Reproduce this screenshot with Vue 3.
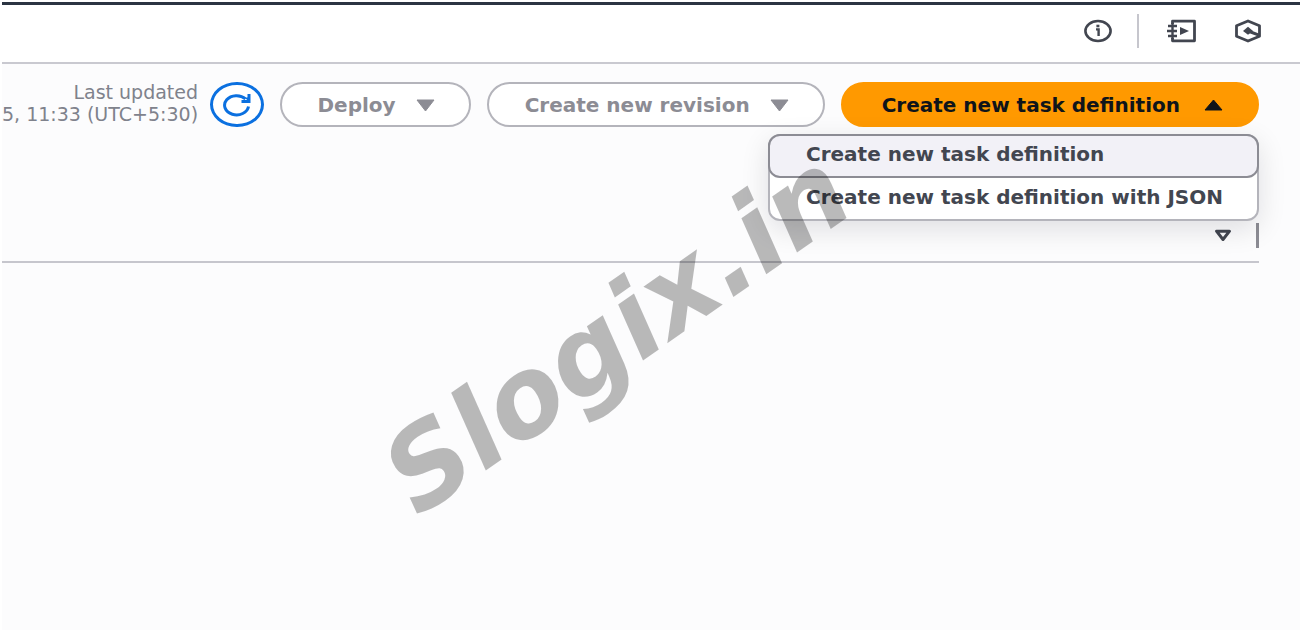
<script setup>
import { ref } from 'vue'

const menuOpen = ref(true)
const menuItems = ['Create new task definition', 'Create new task definition with JSON']
</script>

<template>
  <div class="page">
    <header class="topbar">
      <button class="icon-btn" type="button" aria-label="Info">
        <svg width="28" height="24" viewBox="0 0 28 24" fill="none" stroke="#424650" stroke-width="2.6">
          <ellipse cx="14" cy="12" rx="12.6" ry="10" />
          <path d="M12 10.4h2.600v6.6" stroke-width="2.4" />
          <path d="M12.4 7h3" stroke-width="2.6" />
        </svg>
      </button>
      <span class="divider"></span>
      <button class="icon-btn notebook" type="button" aria-label="Tutorials">
        <svg width="30" height="24" viewBox="0 0 30 24" fill="none" stroke="#424650" stroke-width="2.8">
          <path d="M5.500 5V2.200h22v19.600h-22V19" stroke-linejoin="round" />
          <path d="M1 7h9M0 12h10M1 17h9" stroke-width="2.4" />
          <path d="M5.500 4v16" stroke-width="2.4" />
          <path d="M13 8v8l9-4z" fill="#424650" stroke="none" />
        </svg>
      </button>
      <button class="icon-btn" type="button" aria-label="Preferences">
        <svg width="28" height="24" viewBox="0 0 28 24" fill="none" stroke="#424650" stroke-width="2.8">
          <path d="M14 2l11.500 4.800v10.400L14 22l-11.500-4.800V6.800z" stroke-linejoin="round" />
          <path d="M9 12l5-4.200 5 4.200-5 3.800z" fill="#424650" stroke="none" />
          <path d="M14 12l11 4.200" stroke-width="3" />
        </svg>
      </button>
    </header>

    <main class="content">
      <div class="toolbar">
        <p class="updated">Last updated<br />5, 11:33 (UTC+5:30)</p>
        <button class="refresh" type="button" aria-label="Refresh">
          <svg width="28" height="24" viewBox="0 0 28 24" fill="none" stroke="#0b70e0" stroke-width="3">
            <path d="M25.500 13.500A12 9.600 0 1 1 22.500 5.800" />
            <path d="M26 1v7.500H18.500" />
            <path d="M22 5l4 3.500V4z" fill="#0b70e0" stroke="none" />
          </svg>
        </button>
        <button class="btn" type="button">
          Deploy
          <svg width="19" height="12" viewBox="0 0 19 12"><path d="M1 1h17L9.500 12z" fill="currentColor" stroke="currentColor" stroke-linejoin="round" /></svg>
        </button>
        <button class="btn" type="button">
          Create new revision
          <svg width="19" height="12" viewBox="0 0 19 12"><path d="M1 1h17L9.500 12z" fill="currentColor" stroke="currentColor" stroke-linejoin="round" /></svg>
        </button>
        <div class="dropdown">
          <button class="btn primary" type="button" :aria-expanded="menuOpen" @click="menuOpen = !menuOpen">
            Create new task definition
            <svg width="19" height="12" viewBox="0 0 19 12"><path d="M1 11h17L9.500 1z" fill="currentColor" stroke="currentColor" stroke-linejoin="round" /></svg>
          </button>
          <ul v-if="menuOpen" class="menu">
            <li v-for="(item, i) in menuItems" :key="item">
              <button type="button" class="item" :class="{ active: i === 0 }">{{ item }}</button>
            </li>
          </ul>
        </div>
      </div>
      <div class="table-head">
        <button class="sort" type="button" aria-label="Sort">
          <svg width="18" height="13" viewBox="0 0 18 13"><path d="M2.500 2.200h13L9 10.500z" fill="none" stroke="#424650" stroke-width="3" stroke-linejoin="round" /></svg>
        </button>
        <span class="resizer"></span>
      </div>
    </main>

    <svg class="watermark" width="1300" height="630" aria-hidden="true">
      <text transform="translate(418 518) rotate(-35)">Slogix.in</text>
    </svg>
  </div>
</template>

<style>
body {
  background: #fff;
}
</style>

<style scoped>
.page {
  position: relative;
  display: flex;
  flex-direction: column;
  min-height: 100vh;
  padding: 2px 0 0 2px;
  box-sizing: border-box;
  overflow: hidden;
  font-family: "DejaVu Sans", sans-serif;
}
button {
  font-family: inherit;
  cursor: pointer;
}
svg {
  display: block;
  flex: none;
}
.topbar {
  display: flex;
  align-items: center;
  justify-content: flex-end;
  height: 52px;
  padding: 0 38px 5px 0;
  border-top: 3px solid #2b3442;
  border-bottom: 2px solid #c9c9d0;
  background: #fff;
}
.icon-btn {
  padding: 0;
  border: 0;
  background: none;
}
.divider {
  width: 2px;
  height: 34px;
  margin: 0 28px 0 25px;
  background: #c6c6cd;
}
.notebook {
  margin-right: 37px;
}
.content {
  flex: 1;
  background: #fcfcfd;
}
.toolbar {
  display: flex;
  align-items: flex-start;
  justify-content: flex-end;
  gap: 16px;
  padding: 18px 41px 0 0;
}
.updated {
  margin: -1px -4px 0 0;
  color: #7f828c;
  font-size: 19px;
  line-height: 22px;
  text-align: right;
  white-space: nowrap;
}
.refresh {
  display: flex;
  align-items: center;
  justify-content: center;
  width: 56px;
  height: 45px;
  padding: 0;
  border: 3px solid #0b70e0;
  border-radius: 50%;
  background: #fff;
}
.btn {
  display: flex;
  align-items: center;
  gap: 20px;
  height: 45px;
  padding: 0 34px 0 36px;
  border: 2px solid #b4b4bb;
  border-radius: 28px;
  background: #fff;
  color: #8c8c94;
  font-size: 20px;
  font-weight: bold;
  white-space: nowrap;
}
.btn.primary {
  gap: 24px;
  padding: 0 34px 0 39px;
  border-color: #ff9900;
  background: #ff9900;
  color: #0f141a;
}
.dropdown {
  position: relative;
}
.menu {
  position: absolute;
  z-index: 1;
  top: 52px;
  right: 0;
  box-sizing: border-box;
  width: 491px;
  margin: 0;
  padding: 0;
  border: 2px solid #b4b4bb;
  border-radius: 12px;
  background: #fff;
  box-shadow: 0 8px 28px rgba(0, 7, 22, 0.12);
  list-style: none;
}
.item {
  display: block;
  width: 100%;
  height: 41px;
  padding: 0 36px 4px;
  border: 0;
  background: none;
  color: #424650;
  font-size: 20px;
  font-weight: bold;
  text-align: left;
  white-space: nowrap;
}
.item.active {
  width: calc(100% + 4px);
  height: 44px;
  margin: -2px -2px 0;
  border: 2px solid #8c8c94;
  border-radius: 12px;
  background: #f2f1f7;
}
.table-head {
  display: flex;
  align-items: center;
  justify-content: flex-end;
  gap: 24px;
  height: 26px;
  margin-right: 41px;
  padding: 95px 0 13px;
  border-bottom: 2px solid #c6c6cd;
}
.sort {
  padding: 0;
  border: 0;
  background: none;
}
.resizer {
  width: 3px;
  height: 25px;
  background: #8c8c94;
}
.watermark {
  position: absolute;
  z-index: 2;
  top: 0;
  left: 0;
  pointer-events: none;
}
.watermark text {
  fill: #000;
  fill-opacity: 0.27;
  font: italic bold 110px "DejaVu Sans", sans-serif;
}
</style>
